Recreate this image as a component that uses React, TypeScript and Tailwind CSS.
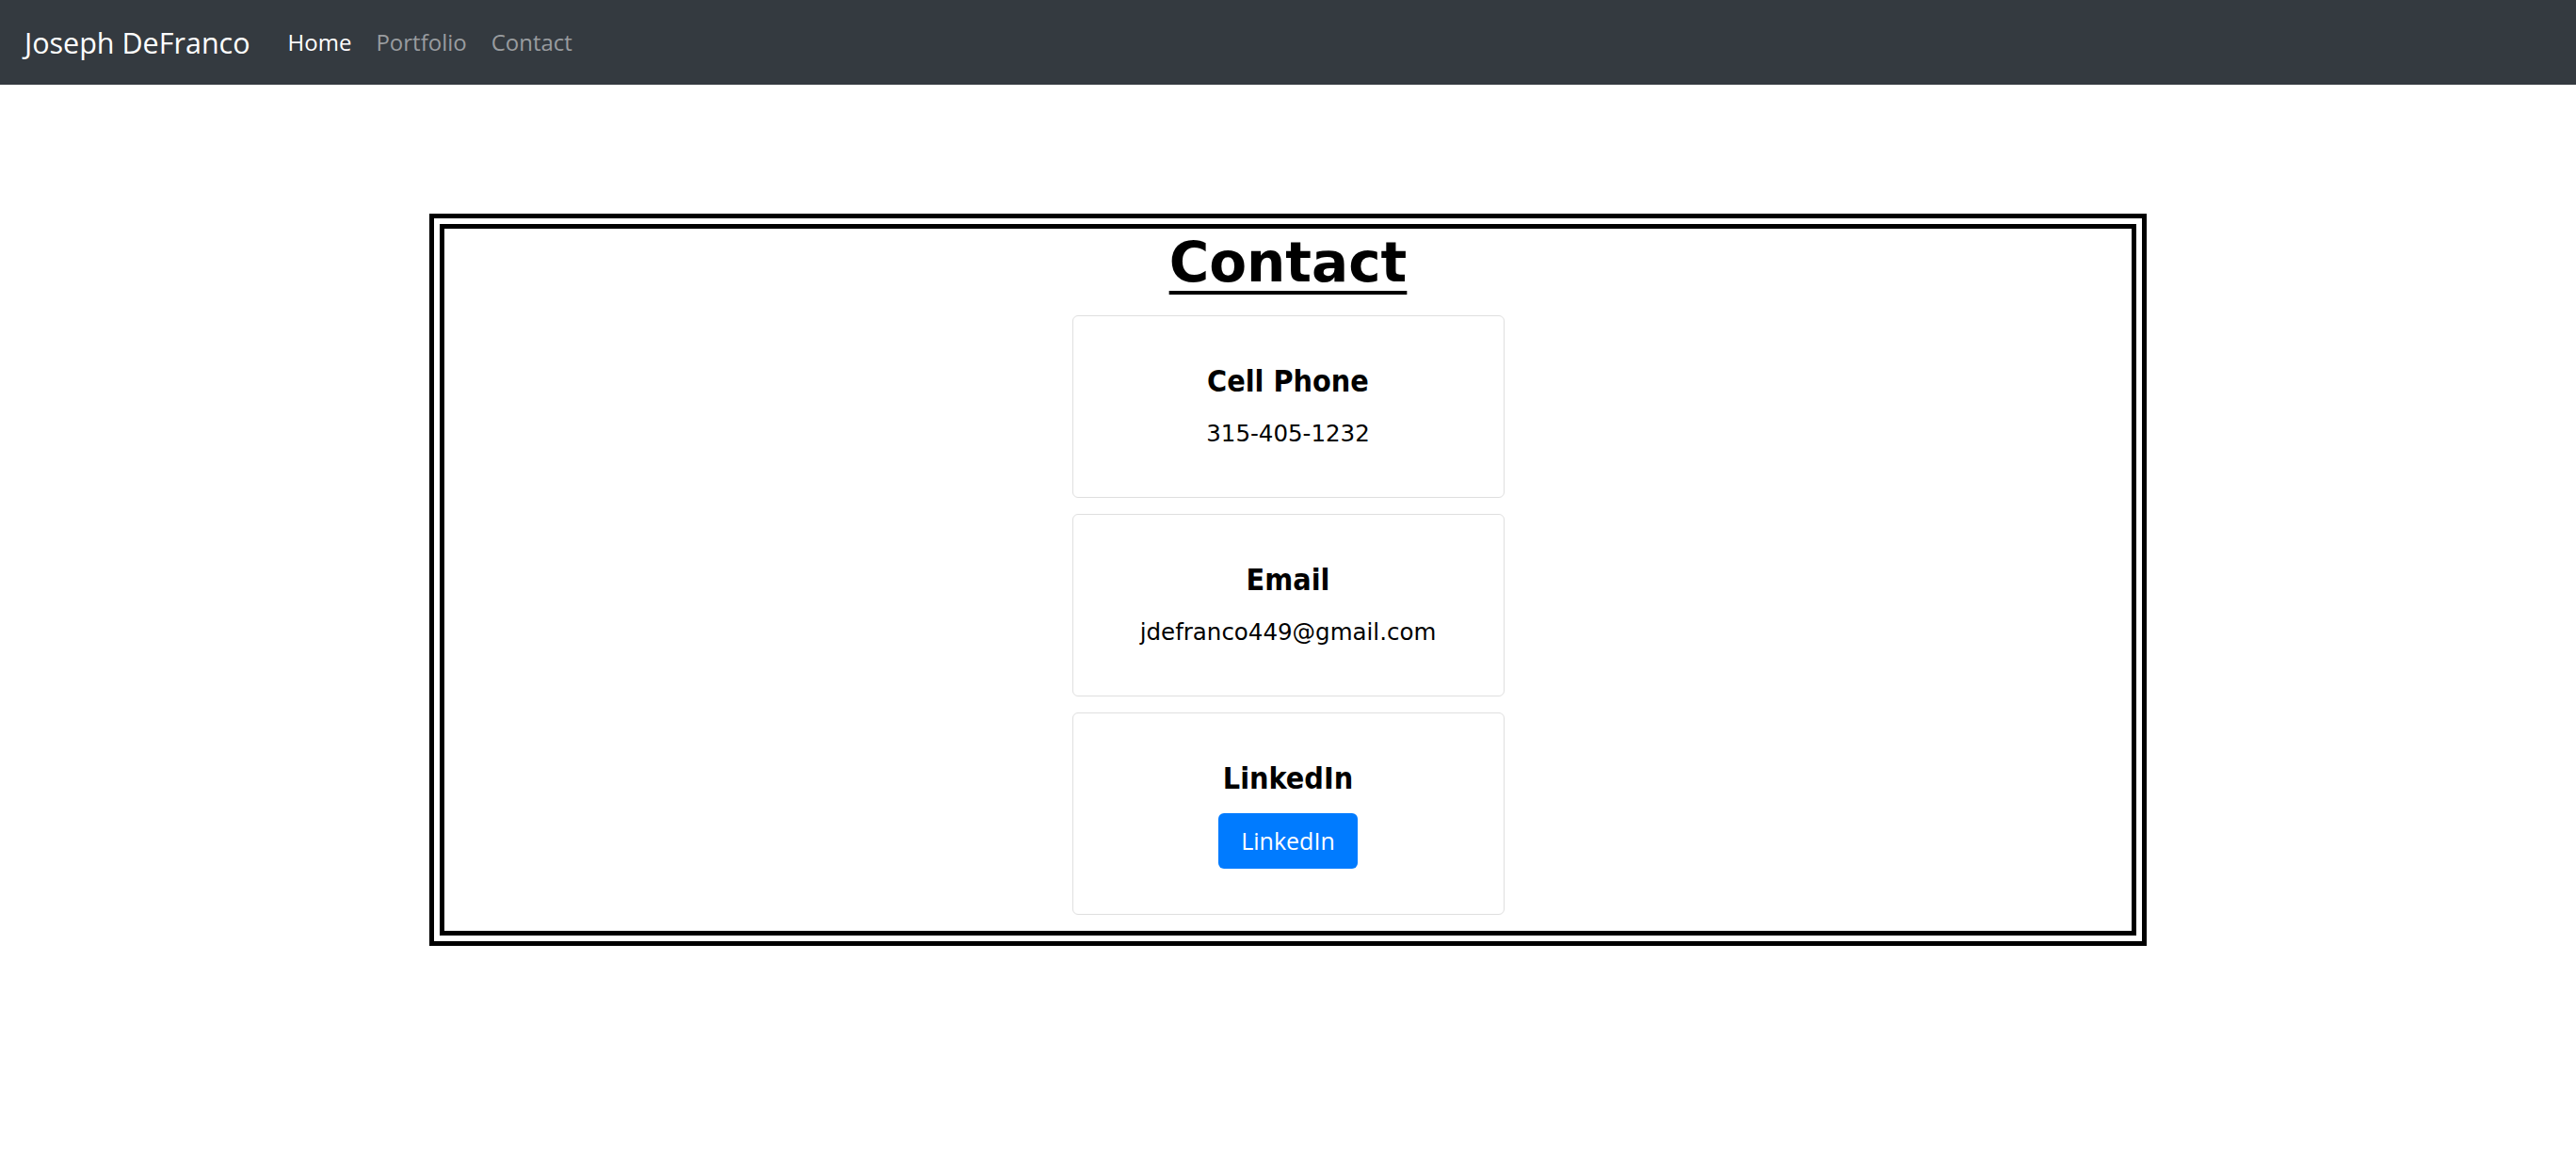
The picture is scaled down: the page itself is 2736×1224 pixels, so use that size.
const contacts = [
  { title: "Cell Phone", value: "315-405-1232" },
  { title: "Email", value: "jdefranco449@gmail.com" },
];

const navFont = { fontFamily: '"Open Sans", "Noto Sans", sans-serif' };

function Navbar() {
  return (
    <nav
      className="flex h-[90px] items-center bg-[#343a40] px-[26px]"
      style={navFont}
    >
      <a href="#" className="mr-[40px] text-[30.5px] leading-[45px] text-white">
        Joseph DeFranco
      </a>
      <div className="flex items-center gap-[26px] text-[24px] leading-[38px]">
        <a href="#" className="text-white">Home</a>
        <a href="#" className="text-[#999c9f]">Portfolio</a>
        <a href="#" className="text-[#999c9f]">Contact</a>
      </div>
    </nav>
  );
}

function ContactCard({ title, children }: { title: string; children: React.ReactNode }) {
  return (
    <div className="mb-[17px] flex w-[459px] flex-col items-center rounded-[6px] border border-[#dfdfdf] bg-white pt-[50px] pb-[48px] text-center">
      <h5 className="mb-[18px] font-['DejaVu_Sans_Condensed','DejaVu_Sans',sans-serif] text-[32px] font-bold leading-[38px] text-black">
        {title}
      </h5>
      {children}
    </div>
  );
}

export default function App() {
  return (
    <div className="min-h-[1224px] bg-white">
      <Navbar />
      <div className="flex justify-center pt-[137px]">
        {/* double frame round the contact list */}
        <section className="flex w-[1824px] flex-col items-center border-[16px] border-double border-black pt-[3px]">
          <h1 className="mb-[22px] font-['DejaVu_Sans',sans-serif] text-[58px] font-bold leading-[67px] text-black underline decoration-4 underline-offset-[10px]">
            Contact
          </h1>
          {contacts.map((c) => (
            <ContactCard key={c.title} title={c.title}>
              <p className="font-['DejaVu_Sans',sans-serif] text-[24.5px] leading-[38px] text-black">
                {c.value}
              </p>
            </ContactCard>
          ))}
          <ContactCard title="LinkedIn">
            <a
              href="#"
              className="flex h-[59px] w-[148px] items-center justify-center rounded-[6px] bg-[#007bff] text-[25px] text-white"
              style={navFont}
            >
              LinkedIn
            </a>
          </ContactCard>
        </section>
      </div>
    </div>
  );
}
